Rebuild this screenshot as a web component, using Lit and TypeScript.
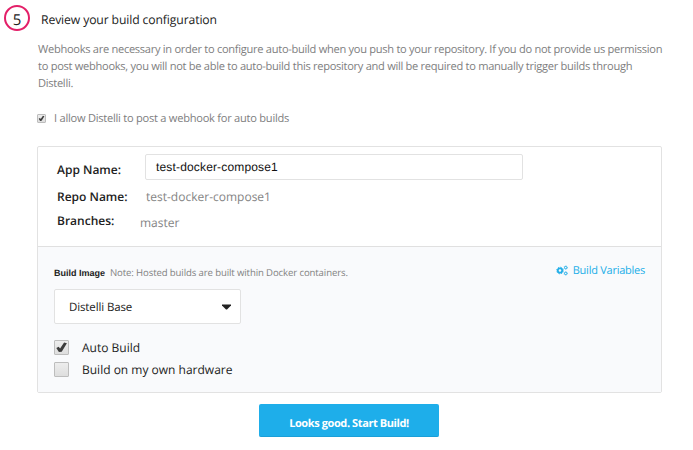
import { LitElement, html, css, svg } from "lit";
import { customElement, property } from "lit/decorators.js";

@customElement("check-box")
class CheckBox extends LitElement {
  @property({ type: Boolean }) checked = false;
  static styles = css`
    :host { display: block; flex: none; }
    .box {
      box-sizing: border-box; width: 100%; height: 100%;
      border: 1px solid #bdbdbd; border-radius: 1px;
      background: linear-gradient(#ededed, #dedede);
    }
    svg { display: block; width: 100%; height: 100%; }
  `;
  render() {
    return html`<div class="box">
      ${this.checked
        ? html`<svg viewBox="0 0 12 12"><path d="M1.2 6.4 3.4 5.3 4.7 7 8.4 1.4 11 2 6.2 9.9 3.6 10.1Z" fill="#3c3c3c"/></svg>`
        : null}
    </div>`;
  }
}

@customElement("app-root")
class AppRoot extends LitElement {
  static styles = css`
    :host {
      display: block; width: 693px; height: 450px; overflow: hidden;
      background: #fff; color: #222; text-rendering: geometricPrecision;
      font-family: "Open Sans", sans-serif; font-size: 12px;
    }
    * { box-sizing: border-box; }
    .page { padding: 5px 31px 0 4px; }
    .head { display: flex; height: 27px; }
    .step {
      width: 26px; height: 26px; border: 2px solid #e31f68; border-radius: 50%;
      font-size: 15px; line-height: 27px; text-align: center; color: #222;
    }
    .title { margin-left: 11px; font-size: 12.2px; letter-spacing: -0.12px; line-height: 29px; white-space: nowrap; }
    .body { margin-left: 33px; }
    .intro { padding: 9px 0 0 1px; height: 78px; color: #7e7e80; font-size: 11.1px; letter-spacing: -0.291px; line-height: 17px; white-space: nowrap; }
    .allow { display: flex; align-items: center; height: 16px; color: #7e7e80; font-size: 11.1px; letter-spacing: -0.252px; white-space: nowrap; }
    .allow check-box { width: 9px; height: 9px; margin: 0 8px 0 0; }
    .card { margin-top: 20px; height: 247px; border: 1px solid #e2e2e2; border-radius: 2px; }
    .details { height: 100px; padding: 7px 0 0 19px; border-bottom: 1px solid #e0e0e0; }
    .row { display: flex; white-space: nowrap; }
    .row b { flex: none; font-weight: 600; font-size: 12px; }
    .app { height: 30px; }
    .app b { width: 88px; line-height: 31px; }
    .repo { height: 26px; }
    .repo b { width: 89px; line-height: 25px; }
    .repo span { line-height: 25px; }
    .branches b { width: 83px; line-height: 22px; }
    .branches span { line-height: 26px; }
    .row span { color: #848484; font-size: 12px; }
    .field {
      width: 378px; height: 26px; padding-left: 10px; border: 1px solid #e2e2e2; border-radius: 2px;
      font: 12px/24px "Liberation Sans", sans-serif; letter-spacing: 0.16px; color: #111;
    }
    .options { height: 145px; background: #f9fafc; padding: 16px 16px 0 16px; }
    .bar { display: flex; height: 26px; white-space: nowrap; }
    .bar b { font: bold 9px/20px "Liberation Sans", sans-serif; }
    .note { margin-left: 5px; font-size: 9.6px; letter-spacing: -0.12px; line-height: 20px; color: #828282; }
    .vars { margin-left: auto; display: flex; color: #22aee8; font-size: 11px; letter-spacing: -0.25px; line-height: 15px; }
    .vars svg { width: 12px; height: 11px; margin: 2px 5px 0 0; }
    .select {
      display: flex; align-items: center; justify-content: space-between; width: 187px; height: 35px;
      padding: 0 9px 0 14px; border: 1px solid #e2e2e2; border-radius: 2px; background: #fff;
      font-size: 11.5px; letter-spacing: -0.12px; line-height: 17px;
    }
    .select span { padding-top: 1px; }
    .select svg { width: 9px; height: 6px; }
    .opts { padding-top: 12px; }
    .opt { display: flex; align-items: center; height: 22px; font-size: 12px; white-space: nowrap; }
    .opt check-box { width: 15px; height: 15px; margin-right: 13px; }
    .go {
      width: 180px; height: 33px; margin: 11px 0 0 222px; border-radius: 2px; background: #1eaeea;
      border-bottom: 1px solid #1a9fd8; color: #fff; font-size: 11px; letter-spacing: -0.4px; font-weight: 700;
      line-height: 39px; text-align: center; white-space: nowrap;
    }
  `;
  gear(cx: number, cy: number, r: number, n: number) {
    const rim = 2 * Math.PI * r;
    return svg`<circle cx=${cx} cy=${cy} r=${r} fill="none" stroke="currentColor" stroke-width=${r * 0.8}/>
      <circle cx=${cx} cy=${cy} r=${r * 1.5} fill="none" stroke="currentColor" stroke-width=${r * 0.45}
        stroke-dasharray="${(rim * 1.5) / n / 2} ${(rim * 1.5) / n / 2}"/>`;
  }
  render() {
    return html`<div class="page">
      <div class="head"><div class="step">5</div><div class="title"><span>Review your build configuration</span></div></div>
      <div class="body">
        <div class="intro">
          <span>Webhooks are necessary in order to configure auto-build when you push to your repository. If you do not provide us permission</span><br>
          <span>to post webhooks, you will not be able to auto-build this repository and will be required to manually trigger builds through</span><br>
          <span>Distelli.</span>
        </div>
        <div class="allow"><check-box checked></check-box><span>I allow Distelli to post a webhook for auto builds</span></div>
        <div class="card">
          <div class="details">
            <div class="row app"><b>App Name:</b><div class="field">test-docker-compose1</div></div>
            <div class="row repo"><b>Repo Name:</b><span>test-docker-compose1</span></div>
            <div class="row branches"><b>Branches:</b><span>master</span></div>
          </div>
          <div class="options">
            <div class="bar"><b>Build Image</b><span class="note">Note: Hosted builds are built within Docker containers.</span>
              <div class="vars"><svg viewBox="0 0 12 11">${this.gear(4, 5.5, 2.2, 8)}${this.gear(9.7, 2.6, 1.2, 6)}${this.gear(9.7, 8.4, 1.2, 6)}</svg><span>Build Variables</span></div>
            </div>
            <div class="select"><span>Distelli Base</span><svg viewBox="0 0 9 6"><path d="M0 .5H9V1.5L5 5.5H4L0 1.5Z" fill="#222"/></svg></div>
            <div class="opts">
              <div class="opt"><check-box checked></check-box><span>Auto Build</span></div>
              <div class="opt"><check-box></check-box><span>Build on my own hardware</span></div>
            </div>
          </div>
        </div>
        <div class="go">Looks good. Start Build!</div>
      </div>
    </div>`;
  }
}
